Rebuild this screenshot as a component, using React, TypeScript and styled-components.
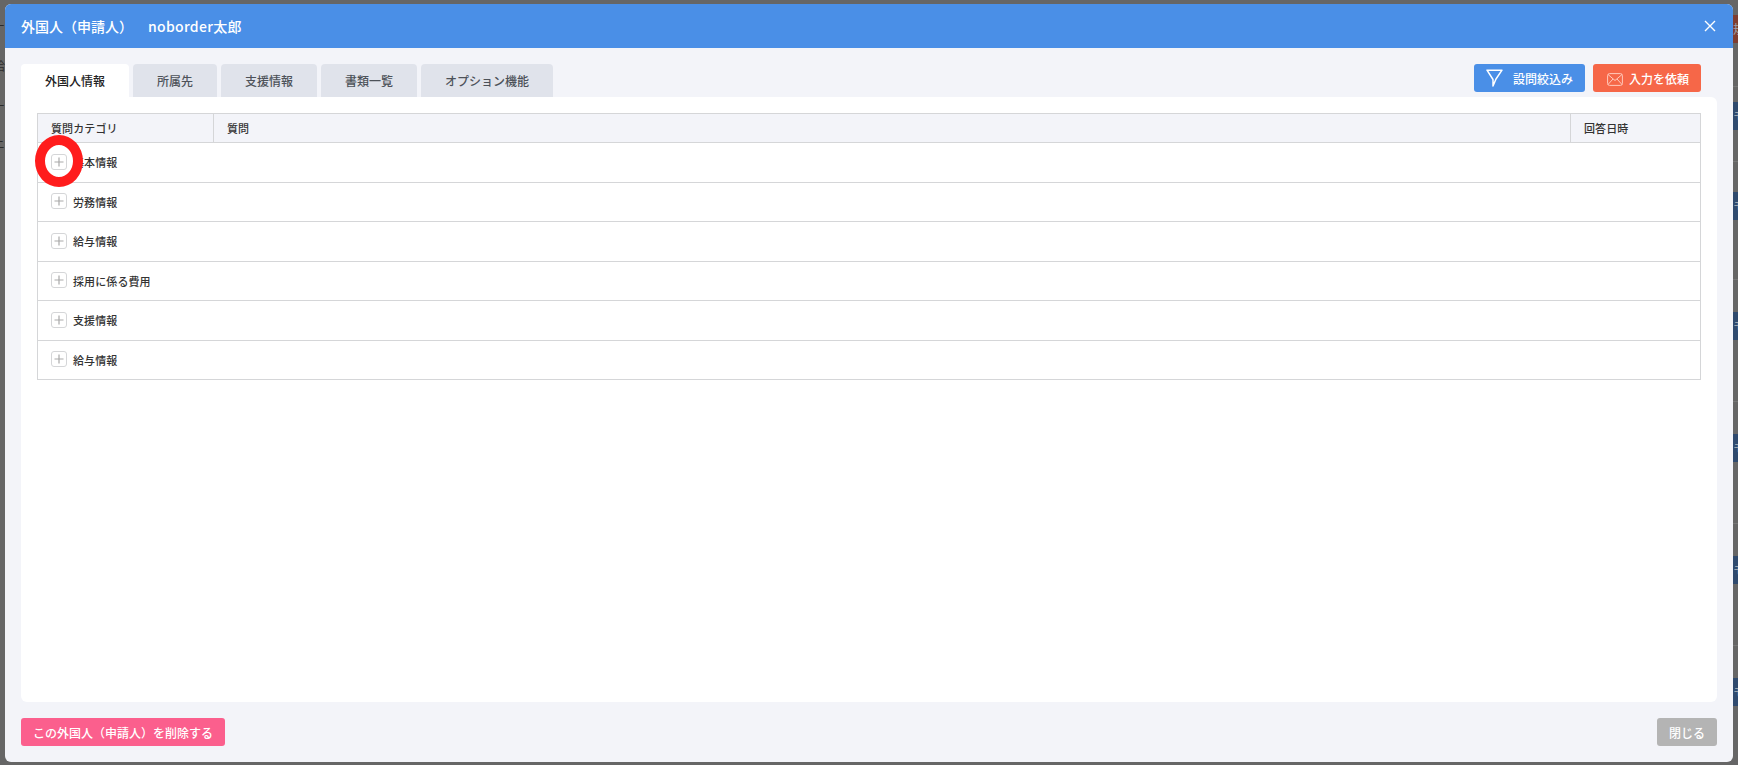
import React from "react";
import styled, { createGlobalStyle } from "styled-components";

const Global = createGlobalStyle`
  html, body { margin: 0; padding: 0; width: 100%; height: 100%; overflow: hidden; background: #666; }
  * { box-sizing: border-box; }
  body { font-family: "Noto Sans CJK JP", "Noto Sans", sans-serif; }
`;

const Page = styled.div`
  position: relative;
  width: 1738px;
  height: 765px;
  overflow: hidden;
  background: #666;
  display: flex;
  justify-content: space-between;
`;

const BackLeft = styled.div`
  width: 5px;
  overflow: hidden;
  padding-top: 19px;
  display: flex;
  flex-direction: column;
  color: #2b2b2b;
  font-size: 12px;
  line-height: 14px;
`;

const BackMark = styled.span<{ $h: number }>`
  display: block;
  height: ${(p) => p.$h}px;
  white-space: nowrap;
  text-indent: -7px;
`;

const BackRight = styled.div`
  width: 5px;
  overflow: hidden;
  padding-top: 15px;
`;

const BackRow = styled.div<{ $h: number }>`
  height: ${(p) => p.$h}px;
  border-bottom: 1px dashed #777;
`;

const BackTag = styled.div<{ $bg: string; $mt: number }>`
  margin-top: ${(p) => p.$mt}px;
  height: 28px;
  width: 40px;
  background: ${(p) => p.$bg};
  color: #9aa3ad;
  font-size: 12px;
  line-height: 28px;
  white-space: nowrap;
`;

const Modal = styled.div`
  position: absolute;
  left: 5px;
  top: 4px;
  width: 1728px;
  height: 758px;
  border-radius: 6px;
  overflow: hidden;
  background: #f3f4f9;
  display: flex;
  flex-direction: column;
`;

const Header = styled.header`
  height: 44px;
  flex: none;
  background: #4a8fe7;
  color: #fff;
  display: flex;
  align-items: center;
  justify-content: space-between;
  padding: 0 17px 0 16px;
`;

const Title = styled.h1`
  margin: 0;
  font-size: 14px;
  font-weight: 500;
  line-height: 20px;
  white-space: pre;
`;

const TitleName = styled.span`
  margin-left: 8px;
  letter-spacing: 0.3px;
`;

const CloseBtn = styled.button`
  border: 0;
  background: none;
  padding: 0;
  width: 12px;
  height: 12px;
  color: #fff;
  display: flex;
`;

const Body = styled.div`
  flex: 1;
  display: flex;
  flex-direction: column;
  padding: 16px;
  min-height: 0;
`;

const TabBar = styled.div`
  display: flex;
  align-items: flex-start;
  height: 33px;
  flex: none;
`;

const Tab = styled.div<{ $active?: boolean; $w: number }>`
  width: ${(p) => p.$w}px;
  height: 33px;
  margin-right: 4px;
  border-radius: 4px 4px 0 0;
  background: ${(p) => (p.$active ? "#fff" : "#e0e3eb")};
  color: ${(p) => (p.$active ? "#222" : "#4d5259")};
  font-size: 12px;
  font-weight: 500;
  display: flex;
  align-items: center;
  justify-content: center;
`;

const Actions = styled.div`
  margin-left: auto;
  margin-right: 16px;
  display: flex;
  gap: 8px;
`;

const ActionBtn = styled.button<{ $bg: string; $w: number }>`
  width: ${(p) => p.$w}px;
  height: 28px;
  border: 0;
  border-radius: 3px;
  background: ${(p) => p.$bg};
  color: #fff;
  font-family: inherit;
  font-size: 12px;
  font-weight: 500;
  display: flex;
  align-items: center;
  padding: 0;
`;

const FilterGlyph = styled.svg`
  margin: 0 10px 0 12px;
  flex: none;
`;

const MailGlyph = styled.svg`
  margin: 2px 6px 0 14px;
  flex: none;
`;

const Panel = styled.main`
  flex: 1;
  min-height: 0;
  background: #fff;
  border-radius: 0 6px 6px 6px;
  padding: 16px 16px 0;
`;

const Table = styled.div`
  border: 1px solid #d5d6d8;
  border-bottom: 0;
`;

const HeadRow = styled.div`
  display: grid;
  grid-template-columns: 175px 1fr 130px;
  height: 29px;
  background: #f3f4f9;
  border-bottom: 1px solid #d5d6d8;
`;

const HeadCell = styled.div`
  display: flex;
  align-items: center;
  padding-left: 13px;
  font-size: 11px;
  letter-spacing: 0.1px;
  font-weight: 500;
  color: #333;
  & + & { border-left: 1px solid #d5d6d8; }
`;

const Row = styled.div`
  position: relative;
  height: 39.5px;
  display: flex;
  align-items: center;
  padding-left: 13px;
  border-bottom: 1px solid #d5d6d8;
`;

const PlusBox = styled.span`
  width: 16px;
  height: 16px;
  flex: none;
  margin: -1px 6px 0 0;
  border: 1px solid #d5d6d8;
  border-radius: 3px;
  color: #a9a9a9;
  display: flex;
  align-items: center;
  justify-content: center;
  background: #fff;
`;

const RowLabel = styled.span`
  font-size: 11px;
  letter-spacing: 0.1px;
  font-weight: 500;
  color: #333;
`;

const Ring = styled.span`
  position: absolute;
  left: -3px;
  top: -8px;
  width: 48px;
  height: 52px;
  border: 10px solid #ff1c1c;
  border-radius: 50%;
`;

const Footer = styled.footer`
  flex: none;
  display: flex;
  justify-content: space-between;
  margin-top: 16px;
`;

const FootBtn = styled.button<{ $bg: string; $w: number }>`
  width: ${(p) => p.$w}px;
  height: 28px;
  border: 0;
  border-radius: 3px;
  background: ${(p) => p.$bg};
  color: #fff;
  font-family: inherit;
  font-size: 12px;
  font-weight: 500;
  padding: 0;
`;

const tabs: [string, number][] = [
  ["外国人情報", 108],
  ["所属先", 84],
  ["支援情報", 96],
  ["書類一覧", 96],
  ["オプション機能", 132],
];

const rows = ["基本情報", "労務情報", "給与情報", "採用に係る費用", "支援情報", "給与情報"];

const backRows: [number, number][] = [
  [72, 0],
  [60, 15],
  [88, 30],
  [90, 32],
  [90, 32],
  [90, 32],
  [90, 32],
  [90, 32],
  [90, 32],
];

export default function App() {
  return (
    <Page>
      <Global />
      <BackLeft>
        <BackMark $h={40}>ー</BackMark>
        <BackMark $h={40}>給料</BackMark>
        <BackMark $h={38}>ー</BackMark>
        <BackMark $h={14}>ニ</BackMark>
      </BackLeft>
      <BackRight>
        {backRows.map(([h, mt], i) => (
          <BackRow key={i} $h={h}>
            <BackTag $bg={i === 0 ? "#7f3d30" : "#2f4a6e"} $mt={mt}>
              {i === 0 ? "規" : "モ"}
            </BackTag>
          </BackRow>
        ))}
      </BackRight>
      <Modal>
        <Header>
          <Title>
            外国人（申請人）　<TitleName>noborder太郎</TitleName>
          </Title>
          <CloseBtn aria-label="閉じる">
            <svg width="12" height="12" viewBox="0 0 12 12" fill="none" stroke="currentColor" strokeWidth="1.4">
              <path d="M1 1 11 11M11 1 1 11" />
            </svg>
          </CloseBtn>
        </Header>
        <Body>
          <TabBar>
            {tabs.map(([t, w], i) => (
              <Tab key={t} $w={w} $active={i === 0}>
                {t}
              </Tab>
            ))}
            <Actions>
              <ActionBtn $bg="#4a8fe7" $w={111}>
                <FilterGlyph width="17" height="18" viewBox="0 0 17 18" fill="none" stroke="#fff" strokeWidth="1.5">
                  <path d="M1 1.2H16L10 10 7 17V10.5Z" strokeLinejoin="round" />
                </FilterGlyph>
                設問絞込み
              </ActionBtn>
              <ActionBtn $bg="#f66748" $w={108}>
                <MailGlyph width="16" height="13" viewBox="0 0 16 13" fill="none" stroke="#ffc9bb" strokeWidth="1">
                  <rect x="0.6" y="0.6" width="14.8" height="11.8" rx="2" />
                  <path d="M1 1.5 8 7.5 15 1.5M1 11.5 6 6M15 11.5 10 6" />
                </MailGlyph>
                入力を依頼
              </ActionBtn>
            </Actions>
          </TabBar>
          <Panel>
            <Table>
              <HeadRow>
                <HeadCell>質問カテゴリ</HeadCell>
                <HeadCell>質問</HeadCell>
                <HeadCell>回答日時</HeadCell>
              </HeadRow>
              {rows.map((r, i) => (
                <Row key={i}>
                  <PlusBox>
                    <svg width="10" height="10" viewBox="0 0 10 10" stroke="currentColor" strokeWidth="1.2">
                      <path d="M5 .5V9.5M.5 5H9.5" />
                    </svg>
                  </PlusBox>
                  <RowLabel>{r}</RowLabel>
                  {i === 0 && <Ring />}
                </Row>
              ))}
            </Table>
          </Panel>
          <Footer>
            <FootBtn $bg="#fb5f8d" $w={204}>この外国人（申請人）を削除する</FootBtn>
            <FootBtn $bg="#b4b4b4" $w={60}>閉じる</FootBtn>
          </Footer>
        </Body>
      </Modal>
    </Page>
  );
}
